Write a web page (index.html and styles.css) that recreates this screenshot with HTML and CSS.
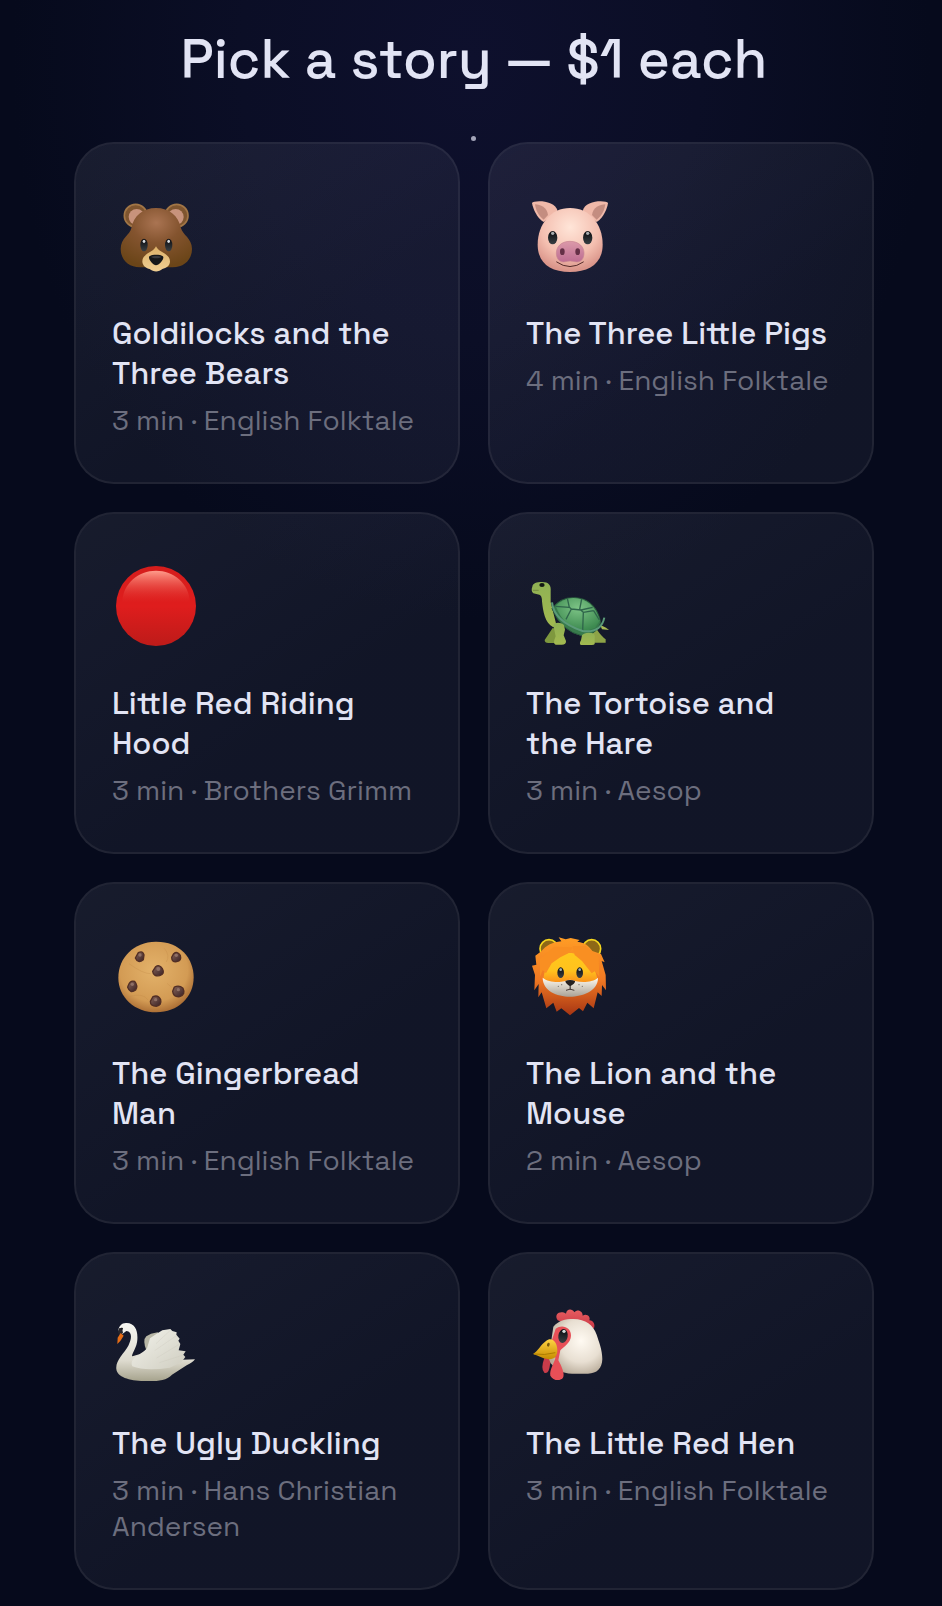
FILE: index.html
```html
<!DOCTYPE html>
<html lang="en">
<head>
<meta charset="utf-8">
<meta name="viewport" content="width=device-width, initial-scale=1">
<title>Pick a story</title>
<link rel="stylesheet" href="styles.css">
</head>
<body>
<main class="page">
  <h1 class="heading">Pick a story — $1 each</h1>
  <span class="star" aria-hidden="true"></span>
  <div class="stories">

    <a class="card" href="#goldilocks">
      <svg class="icon" viewBox="48 48 240 240" aria-hidden="true">
        <defs>
          <radialGradient id="bearFur" cx=".5" cy=".25" r=".75"><stop offset="0" stop-color="#aa7452"/><stop offset=".45" stop-color="#84542f"/><stop offset="1" stop-color="#6b4518"/></radialGradient>
          <linearGradient id="bearNose" x1="0" y1="0" x2="0" y2="1"><stop offset="0" stop-color="#ddb169"/><stop offset="1" stop-color="#f0cf93"/></linearGradient>
          <linearGradient id="eye" x1="0" y1="0" x2="0" y2="1"><stop offset="0" stop-color="#0b0c10"/><stop offset="1" stop-color="#394044"/></linearGradient>
        </defs>
        <g fill="#7f552f" stroke="#a27646" stroke-width="5"><circle cx="107" cy="107" r="34"/><circle cx="230" cy="107" r="34"/></g>
        <g fill="#c8937c"><circle cx="110" cy="111" r="24"/><circle cx="227" cy="111" r="24"/></g>
        <path fill="url(#bearFur)" d="M168 84C129 84 101 107 94 145C90 165 62 174 62 207C62 239 86 262 120 262H218C253 262 276 238 276 207C276 175 248 165 243 145C235 107 208 84 168 84Z"/>
        <path fill="url(#bearNose)" d="M168 199C160 218 127 220 127 244C127 258 140 266 149 267C160 277 177 277 187 267C199 265 210 257 210 244C210 220 176 218 168 199Z"/>
        <g fill="url(#eye)"><ellipse cx="132" cy="195" rx="11" ry="19"/><ellipse cx="206" cy="195" rx="11" ry="19"/></g>
        <g fill="#d9dee2"><ellipse cx="132" cy="184" rx="4" ry="5"/><ellipse cx="206" cy="184" rx="4" ry="5"/></g>
        <path fill="#161719" d="M147 231C149 222 188 222 190 231C192 239 176 256 168 256C161 256 145 239 147 231Z"/>
        <path fill="#3a3b3f" d="M153 231C158 227 180 227 184 231C178 236 160 236 153 231Z"/>
      </svg>
      <h2 class="title">Goldilocks and the Three Bears</h2>
      <p class="meta">3 min · English Folktale</p>
    </a>

    <a class="card" href="#three-little-pigs">
      <svg class="icon" viewBox="60 48 240 240" aria-hidden="true">
        <defs>
          <radialGradient id="pigSkin" cx=".5" cy=".3" r=".68"><stop offset="0" stop-color="#ffe5d8"/><stop offset=".65" stop-color="#f4bfb0"/><stop offset="1" stop-color="#da958a"/></radialGradient>
          <linearGradient id="pigSnout" x1="0" y1="0" x2="0" y2="1"><stop offset="0" stop-color="#db99a9"/><stop offset="1" stop-color="#bd6d92"/></linearGradient>
        </defs>
        <path fill="#f0b9a9" d="M66 69C70 60 137 59 143 94L101 126C79 113 69 85 66 69Z"/>
        <path fill="#f0b9a9" d="M294 69C290 60 223 59 218 94L260 126C281 113 292 85 294 69Z"/>
        <path fill="#c48d80" d="M75 73C92 74 111 82 114 105L101 119C84 108 77 87 75 73Z"/>
        <path fill="#c48d80" d="M286 73C269 74 249 82 246 105L260 119C277 108 284 87 286 73Z"/>
        <path fill="url(#pigSkin)" d="M180 84C123 84 83 132 83 194C83 248 120 276 180 276C240 276 278 248 278 194C278 132 239 84 180 84Z"/>
        <g fill="url(#eye)"><ellipse cx="128" cy="173" rx="14" ry="20"/><ellipse cx="233" cy="173" rx="14" ry="20"/></g>
        <g fill="#a8adb0"><ellipse cx="128" cy="160" rx="5" ry="5"/><ellipse cx="233" cy="160" rx="5" ry="5"/></g>
        <path d="M140 246Q180 274 220 246" fill="none" stroke="#542b2a" stroke-width="3" stroke-linecap="round"/>
        <path fill="url(#pigSnout)" stroke="#c98593" stroke-width="2" d="M180 184C153 184 139 201 139 219C139 237 150 249 166 245Q180 241 195 245C212 249 222 237 222 219C222 201 207 184 180 184Z"/>
        <ellipse cx="157" cy="215" rx="7" ry="10" fill="#653047"/><ellipse cx="203" cy="215" rx="7" ry="10" fill="#653047"/>
      </svg>
      <h2 class="title">The Three Little Pigs</h2>
      <p class="meta">4 min · English Folktale</p>
    </a>

    <a class="card" href="#little-red-riding-hood">
      <svg class="icon" viewBox="48 48 240 240" aria-hidden="true">
        <defs>
          <linearGradient id="redBall" x1="0" y1="0" x2="0" y2="1"><stop offset="0" stop-color="#d51d1c"/><stop offset=".5" stop-color="#df1d1d"/><stop offset="1" stop-color="#bd1b19"/></linearGradient>
          <linearGradient id="redShine" x1="0" y1="0" x2="0" y2="1"><stop offset="0" stop-color="#ff9d8c"/><stop offset="1" stop-color="#e83a34" stop-opacity="0"/></linearGradient>
        </defs>
        <circle cx="168" cy="168" r="120" fill="url(#redBall)"/>
        <path fill="url(#redShine)" d="M168 62C116 62 67 100 67 158H269C269 100 220 62 168 62Z"/>
      </svg>
      <h2 class="title">Little Red Riding Hood</h2>
      <p class="meta">3 min · Brothers Grimm</p>
    </a>

    <a class="card" href="#tortoise-and-hare">
      <svg class="icon" viewBox="60 18 240 240" aria-hidden="true">
        <defs>
          <linearGradient id="skin" x1="0" y1="0" x2="0" y2="1"><stop offset="0" stop-color="#8fb154"/><stop offset="1" stop-color="#a3b950"/></linearGradient>
          <radialGradient id="shell" cx=".5" cy=".3" r=".65"><stop offset="0" stop-color="#7dc486"/><stop offset="1" stop-color="#3d8a50"/></radialGradient>
        </defs>
        <path fill="#a9b955" d="M270 194L288 203L297 210L276 208Z"/>
        <path fill="#7e983e" d="M128 204L104 240Q104 250 117 249H139L154 210Z"/>
        <path fill="#8da347" d="M260 208Q274 229 287 238V248H248L242 212Z"/>
        <path fill="url(#skin)" d="M70 100C64 96 64 86 67 80C68 70 80 66 96 66C116 66 124 76 122 94V126L139 194L130 202C104 190 99 152 96 124Q96 106 88 104Z"/>
        <path fill="#387b4c" stroke="#28583c" stroke-width="3" d="M126 146Q150 112 190 113C235 113 263 140 272 188Q261 224 218 228Q154 214 126 146Z"/>
        <path fill="url(#shell)" d="M137 138Q158 115 190 114C230 114 257 140 270 181L255 203L219 216Q162 202 137 138Z"/>
        <path fill="none" stroke="#2f654b" stroke-width="4" stroke-linejoin="round" d="M137 139L178 142L184 147L213 150L248 142M172 115L178 142M215 117L209 148L220 157L251 152M184 147L168 178M220 157L218 212M251 152L268 180"/>
        <path fill="none" stroke="#5b9a79" stroke-width="6" d="M126 127Q132 184 218 213Q273 220 283 173"/>
        <path fill="url(#skin)" d="M130 195C135 184 158 187 162 196L165 209L161 226L168 243Q169 254 155 254H137Q130 252 133 240L137 229Z"/>
        <path fill="url(#skin)" d="M216 226Q224 216 245 219Q257 222 254 235V252Q252 256 241 255H212Q207 250 213 241Z"/>
        <ellipse cx="96" cy="75" rx="8" ry="6" fill="#111713"/><path d="M69 91H86" stroke="#667836" stroke-width="2"/>
      </svg>
      <h2 class="title">The Tortoise and<br>the Hare</h2>
      <p class="meta">3 min · Aesop</p>
    </a>

    <a class="card" href="#gingerbread-man">
      <svg class="icon" viewBox="48 33 240 240" aria-hidden="true">
        <defs>
          <radialGradient id="dough" cx=".47" cy=".4" r=".6"><stop offset="0" stop-color="#e3b26a"/><stop offset=".75" stop-color="#d39b54"/><stop offset="1" stop-color="#ad7036"/></radialGradient>
          <linearGradient id="chip" x1="0" y1="0" x2="1" y2="1"><stop offset="0" stop-color="#87655a"/><stop offset="1" stop-color="#382023"/></linearGradient>
        </defs>
        <path fill="url(#dough)" d="M167 50C238 49 281 98 281 157C281 217 233 262 169 262C104 262 55 217 55 158C55 98 101 51 167 50Z"/>
        <path d="M87 116Q130 147 152 146M193 70Q211 91 199 111M86 215Q130 202 144 225M201 175L215 187" fill="none" stroke="#c18847" stroke-width="3" opacity=".3"/>
        <g fill="url(#chip)" stroke="#512e25" stroke-width="4" stroke-linejoin="round">
          <path d="M106 99L115 83Q129 76 132 90L130 104Q114 117 106 99Z"/>
          <path d="M215 97L221 86Q232 77 241 91Q246 108 230 110Q215 112 215 97Z"/>
          <path d="M158 139L167 125Q178 117 187 131Q196 147 179 152Q160 155 158 139Z"/>
          <path d="M85 181Q90 165 104 169Q115 182 107 195Q90 207 83 187Z"/>
          <path d="M218 199L223 186Q238 179 249 190Q258 208 239 215Q220 217 218 199Z"/>
          <path d="M151 229L159 215Q174 208 182 224Q186 241 169 244Q151 244 151 229Z"/>
        </g>
        <g fill="#a08176" opacity=".7"><circle cx="120" cy="90" r="5"/><circle cx="229" cy="91" r="5"/><circle cx="175" cy="132" r="6"/><circle cx="97" cy="178" r="5"/><circle cx="235" cy="194" r="5"/><circle cx="167" cy="224" r="5"/></g>
      </svg>
      <h2 class="title">The Gingerbread Man</h2>
      <p class="meta">3 min · English Folktale</p>
    </a>

    <a class="card" href="#lion-and-mouse">
      <svg class="icon" viewBox="60 48 240 240" aria-hidden="true">
        <defs>
          <linearGradient id="mane" x1="0" y1="0" x2="0" y2="1"><stop offset="0" stop-color="#ff9d25"/><stop offset=".55" stop-color="#f07823"/><stop offset="1" stop-color="#a63513"/></linearGradient>
          <linearGradient id="lionFace" x1="0" y1="0" x2="0" y2="1"><stop offset="0" stop-color="#ffc71c"/><stop offset=".5" stop-color="#ffc21d"/><stop offset="1" stop-color="#f97819"/></linearGradient>
          <linearGradient id="jaw" x1="0" y1="0" x2="0" y2="1"><stop offset="0" stop-color="#fffaf0"/><stop offset="1" stop-color="#aaa296"/></linearGradient>
        </defs>
        <g fill="#8e6817" stroke="#f5d61e" stroke-width="5"><circle cx="117" cy="86" r="27"/><circle cx="245" cy="86" r="27"/></g>
        <path fill="url(#mane)" d="M146 52L167 58L182 54L209 60L202 65C225 67 239 80 247 93L273 102L284 127L275 123L287 165L288 211L276 195L275 228L263 217L251 265L232 248L219 274L207 264L180 286L154 265L140 275L130 248L109 265L95 217L85 232L86 192L73 211L75 165L66 137L79 134L76 107L94 94C108 76 128 66 154 64Z"/>
        <path fill="url(#lionFace)" d="M177 99C136 99 107 133 101 171C97 191 115 205 139 205H222C248 205 266 191 261 172C253 129 218 99 177 99Z"/>
        <path fill="#f98f22" d="M188 78L194 105L216 123L245 160L255 154L268 170L266 111L226 78ZM188 82L175 100L151 112L125 130L108 160L98 150L90 170L90 116L132 80Z"/>
        <path fill="url(#jaw)" d="M98 173C113 187 145 188 163 184L180 179L198 184C218 188 250 187 264 173C265 212 217 230 180 230C141 230 98 212 98 173Z"/>
        <g fill="url(#eye)"><ellipse cx="152" cy="158" rx="10" ry="16"/><ellipse cx="209" cy="158" rx="10" ry="16"/></g>
        <g fill="#a8b4b3"><circle cx="152" cy="149" r="4"/><circle cx="209" cy="149" r="4"/></g>
        <path fill="#24201f" d="M166 183Q180 177 195 183C196 190 187 195 182 198V210H179V198C173 194 166 190 166 183Z"/>
        <path d="M168 211Q180 204 193 211" fill="none" stroke="#463934" stroke-width="3"/>
        <g fill="#77716b"><circle cx="155" cy="194" r="2"/><circle cx="145" cy="199" r="2"/><circle cx="207" cy="194" r="2"/><circle cx="217" cy="199" r="2"/></g>
      </svg>
      <h2 class="title">The Lion and the Mouse</h2>
      <p class="meta">2 min · Aesop</p>
    </a>

    <a class="card" href="#ugly-duckling">
      <svg class="icon" viewBox="48 18 240 240" aria-hidden="true">
        <defs>
          <linearGradient id="swanBody" x1="0" y1="0" x2="0" y2="1"><stop offset="0" stop-color="#f7f7f2"/><stop offset=".65" stop-color="#dddace"/><stop offset="1" stop-color="#a6a38d"/></linearGradient>
          <linearGradient id="wing" x1="0" y1="0" x2="1" y2="1"><stop offset="0" stop-color="#f3f3ec"/><stop offset="1" stop-color="#cfcdc0"/></linearGradient>
        </defs>
        <path fill="#b8b7a6" d="M139 151Q127 120 139 109L153 101L173 97L182 111Z"/>
        <path fill="url(#swanBody)" d="M55 91C57 78 65 68 80 69C105 70 114 91 112 119C111 143 92 165 97 169L118 163L149 143L225 151L247 179L285 178Q279 187 260 196L216 224C199 243 166 244 137 243C90 244 51 231 49 207C46 182 72 160 85 137C94 120 99 95 79 93L67 102Z"/>
        <path fill="url(#wing)" d="M97 199C90 184 103 168 125 161L141 145L150 115L170 101L187 91L211 87L217 93L230 97L229 104L239 116L235 122L241 132L236 151L257 154L250 164L256 171L244 187L209 203Q136 214 97 199Z"/>
        <path fill="none" stroke="#c3c1b2" stroke-width="3" opacity=".25" d="M168 131L211 91M164 152L232 105M170 174L239 132M178 188L247 166"/>
        <path fill="#28262c" d="M57 85L66 83L69 99L58 106L54 96Z"/><path fill="#e66d16" d="M62 99L71 107L61 123L52 132L53 113Z"/><circle cx="66" cy="86" r="3" fill="#191b20"/>
      </svg>
      <h2 class="title">The Ugly Duckling</h2>
      <p class="meta">3 min · Hans Christian Andersen</p>
    </a>

    <a class="card" href="#little-red-hen">
      <svg class="icon" viewBox="60 48 240 240" aria-hidden="true">
        <defs>
          <radialGradient id="henHead" cx=".6" cy=".4" r=".65"><stop offset="0" stop-color="#fffaf2"/><stop offset=".6" stop-color="#e8dfd2"/><stop offset="1" stop-color="#b8ab99"/></radialGradient>
          <linearGradient id="comb" x1="0" y1="0" x2="0" y2="1"><stop offset="0" stop-color="#e75e61"/><stop offset="1" stop-color="#c93543"/></linearGradient>
          <linearGradient id="beak" x1="0" y1="0" x2="0" y2="1"><stop offset="0" stop-color="#ffd343"/><stop offset="1" stop-color="#c68c00"/></linearGradient>
        </defs>
        <path fill="url(#comb)" d="M143 91C130 71 152 60 168 71C170 55 187 55 193 67C203 55 219 64 218 77C231 69 243 82 238 91C251 92 256 104 252 115L211 118Z"/>
        <path fill="#c93c4a" d="M103 204Q91 237 103 248Q117 253 120 224L125 205Z"/>
        <path fill="url(#henHead)" d="M130 110C146 92 165 87 190 87C227 88 250 105 260 134C267 156 277 180 277 207C276 236 261 250 234 251H190C156 252 140 239 122 220L116 205Z"/>
        <path fill="#e74f57" d="M137 116C157 101 184 113 183 137C182 158 164 168 151 181L145 211C154 227 167 255 158 265C148 275 127 270 121 257C118 239 133 219 136 205L126 150Z"/>
        <ellipse cx="159" cy="138" rx="14" ry="21" fill="url(#eye)" transform="rotate(8 159 138)"/><circle cx="162" cy="124" r="5" fill="#d3dcda"/>
        <path fill="url(#beak)" d="M69 192C84 184 93 163 108 153C124 139 142 155 142 180C142 201 131 210 112 207C97 206 83 196 69 192Z"/>
        <path fill="none" stroke="#ae7d00" stroke-width="3" d="M72 192Q102 197 136 188"/>
        <ellipse cx="115" cy="164" rx="4" ry="6" fill="#79590b" transform="rotate(15 115 164)"/>
      </svg>
      <h2 class="title">The Little Red Hen</h2>
      <p class="meta">3 min · English Folktale</p>
    </a>

  </div>
</main>
</body>
</html>
```
FILE: styles.css
```css
* {
  box-sizing: border-box;
}

body {
  margin: 0;
  min-height: 100vh;
  background: radial-gradient(ellipse 460px 560px at 50% 60px, #0e102d 0%, #0b0e26 50%, #060a1c 100%);
  background-color: #060a1c;
  color: #e2e4f4;
  font-family: "Space Grotesk", Inter, sans-serif;
}

.page {
  position: relative;
  padding: 24px 68px 16px 74px;
}

.heading {
  margin: 0 0 48px;
  font-size: 55px;
  font-weight: 550;
  line-height: 70px;
  text-align: center;
}

.star {
  position: absolute;
  top: 136px;
  left: 50%;
  width: 5px;
  height: 5px;
  border-radius: 50%;
  background: #a3a4b8;
}

.stories {
  display: grid;
  grid-template-columns: repeat(2, minmax(0, 1fr));
  gap: 28px;
}

.card {
  display: block;
  padding: 52px 36px 44px;
  border: 2px solid rgba(255, 255, 255, 0.11);
  border-radius: 40px;
  background: linear-gradient(145deg, rgba(236, 238, 255, 0.08), rgba(236, 238, 255, 0.05) 60%);
  background-clip: padding-box;
  color: inherit;
  text-decoration: none;
}

.icon {
  display: block;
  width: 80px;
  height: 80px;
  margin: 0 0 37px 4px;
}

.title {
  margin: 0 0 9px;
  font-size: 31px;
  font-weight: 550;
  line-height: 40px;
}

.meta {
  margin: 0;
  color: #6c6e7e;
  font-size: 28px;
  line-height: 36px;
}
```
